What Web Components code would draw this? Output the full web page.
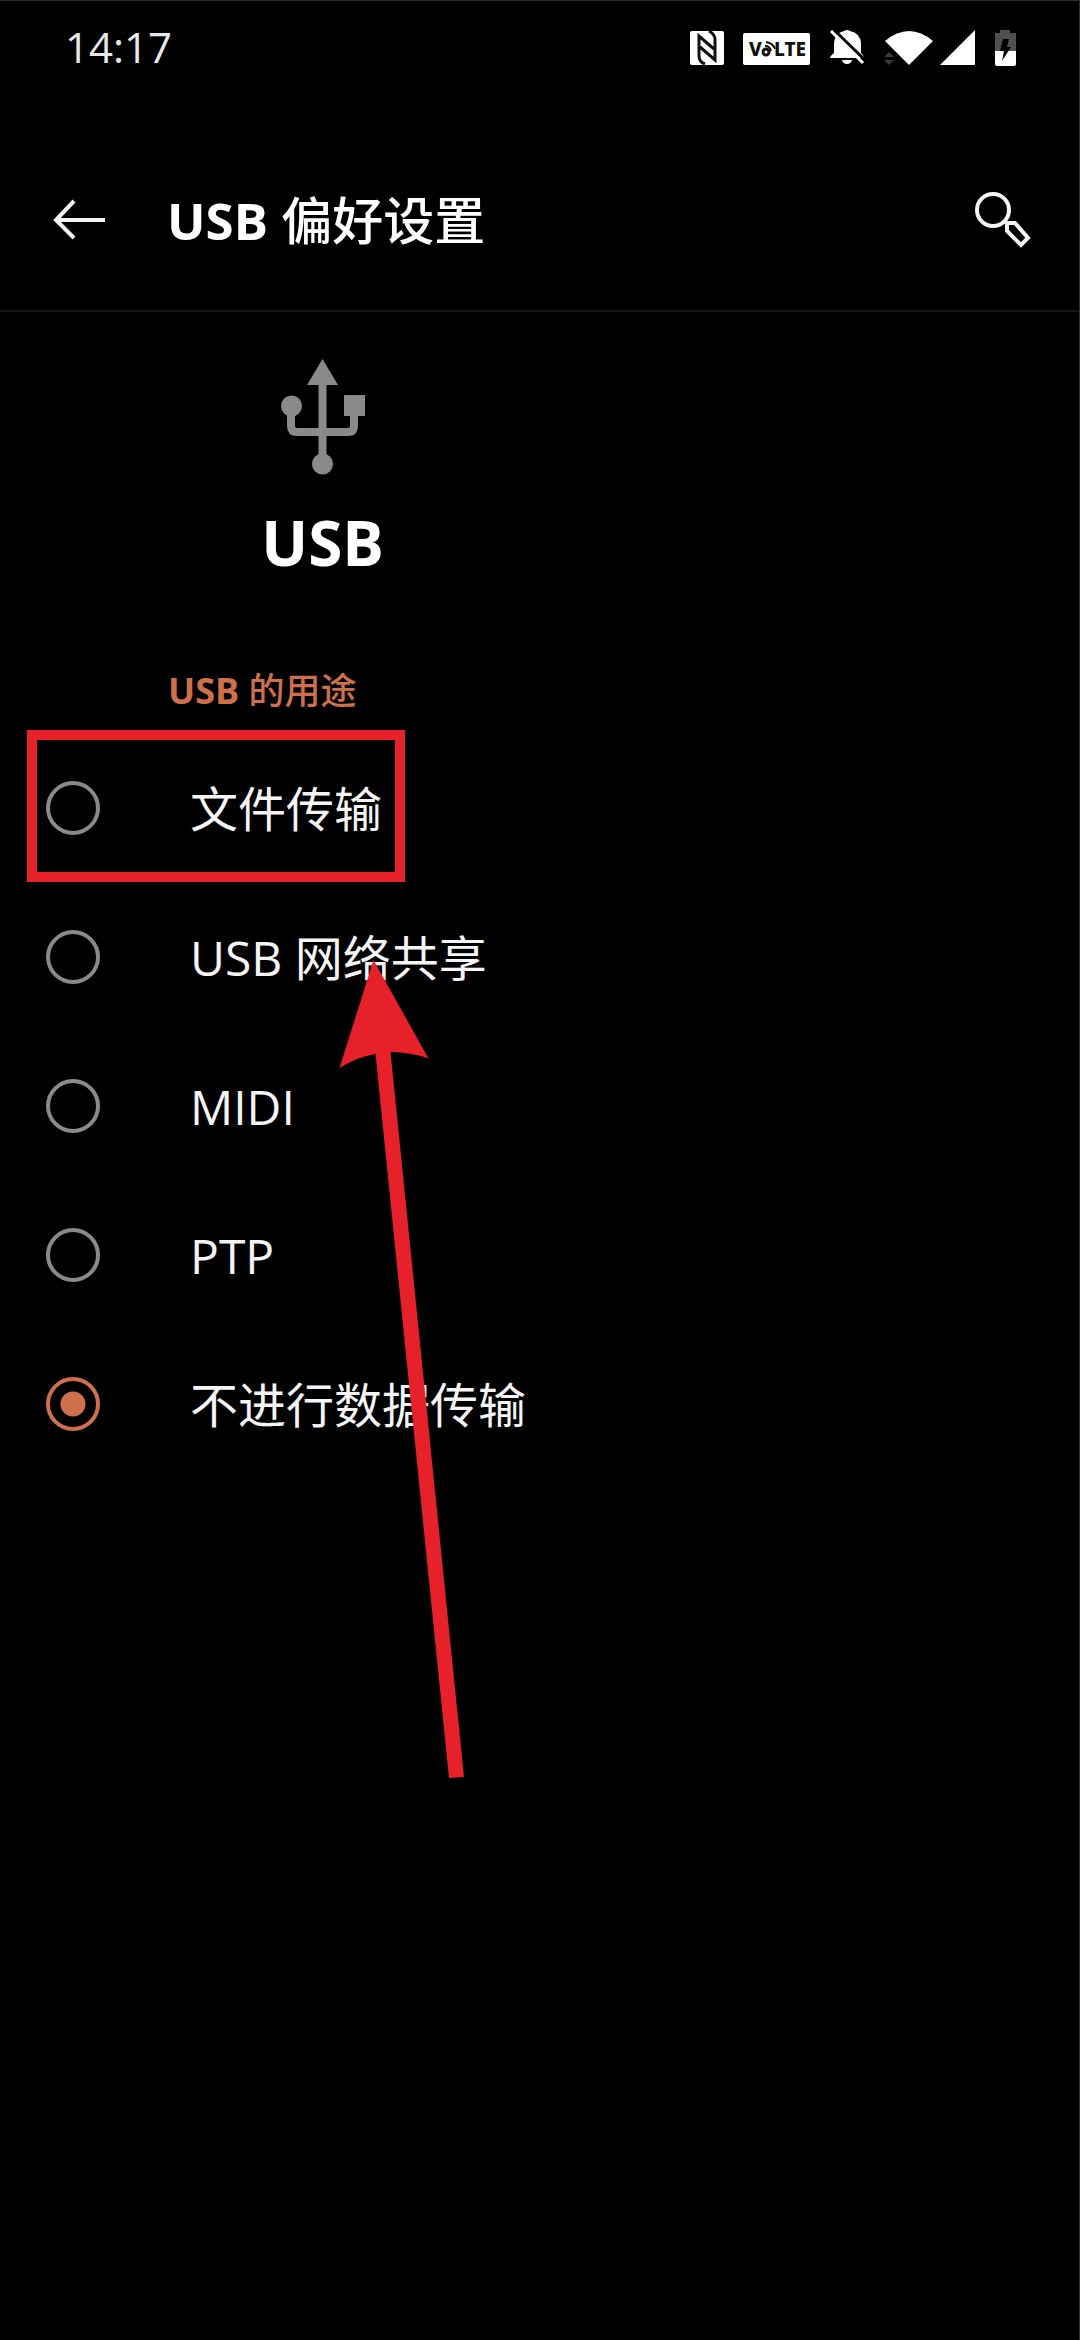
<!DOCTYPE html>
<html lang="zh-CN">
<head>
<meta charset="utf-8">
<meta name="viewport" content="width=device-width, initial-scale=1">
<title>USB 偏好设置</title>
<style>
  html { background: #000; }
  body {
    margin: 0;
    background: #000;
    color: #fff;
    font-family: "Open Sans", "Noto Sans CJK SC", sans-serif;
    --accent: #cf6f4b;
    --muted: #8a8a8a;
    --mark: #e62129;
  }
</style>
</head>
<body>
<phone-screen>
  <status-bar time="14:17"></status-bar>
  <app-bar><b>USB</b> 偏好设置</app-bar>
  <usb-header>USB</usb-header>
  <usb-options><b>USB</b> 的用途</usb-options>
</phone-screen>

<script>
class BaseElement extends HTMLElement {
  constructor() {
    super();
    this.attachShadow({ mode: "open" }).innerHTML = this.template();
  }
}

customElements.define("phone-screen", class extends BaseElement {
  template() {
    return `
    <style>
      :host {
        display: flex; flex-direction: column; box-sizing: border-box;
        min-height: 100vh; background: #000; overflow: hidden;
        border-top: 1px solid #303030; border-right: 1px solid #303030;
      }
    </style>
    <slot></slot>`;
  }
});

customElements.define("status-bar", class extends BaseElement {
  template() {
    return `
    <style>
      :host {
        display: flex; justify-content: space-between; align-items: center;
        height: 94px; padding: 0 63px 0 65px;
      }
      time { font-size: 42px; line-height: 60px; color: #e8e8e8; padding-bottom: 2px; }
      .icons { display: flex; align-items: center; }
      svg { display: block; height: 36px; fill: #fff; }
      text { font-family: "Noto Sans", sans-serif; font-weight: 800; fill: #111; }
    </style>
    <time>${this.getAttribute("time")}</time>
    <div class="icons">
      <svg width="54" height="36" viewBox="688 30 54 36" role="img" aria-label="NFC">
        <rect x="689" y="31" width="34" height="34" rx="2"/>
        <path d="M704 64Q698 62 698 56V36L713 49M708 31Q714 34 714 40V60L699 47" fill="none" stroke="#111" stroke-width="3"/>
      </svg>
      <svg width="86" height="36" viewBox="742 30 86 36" role="img" aria-label="VoLTE">
        <rect x="742" y="33" width="67" height="32" rx="2"/>
        <text x="748" y="56" font-size="19">V</text>
        <text x="773" y="56" font-size="19">LTE</text>
        <circle cx="765" cy="52" r="3" fill="none" stroke="#111" stroke-width="3"/>
        <path d="M764 46Q769 46 770 51M765 42Q772 43 774 49" fill="none" stroke="#111" stroke-width="2"/>
      </svg>
      <svg width="54" height="36" viewBox="828 30 54 36" role="img" aria-label="静音">
        <path d="M829 58Q829 56 833 53V43Q834 33 843 31Q846 29 849 31Q859 33 860 43V53Q863 55 863 58ZM841 60H851Q850 64 846 64Q842 64 841 60Z"/>
        <path d="M832 29L865 61" fill="none" stroke="#000" stroke-width="3"/>
        <path d="M830 31L862 63" fill="none" stroke="#fff" stroke-width="3"/>
      </svg>
      <svg width="56" height="36" viewBox="882 30 56 36" role="img" aria-label="WLAN">
        <path d="M884 41Q908 21 932 41L908 65Z"/>
        <path d="M883 57L888 52L893 57ZM883 60H893L888 65Z" fill="#3a3a3a"/>
      </svg>
      <svg width="56" height="36" viewBox="938 30 56 36" role="img" aria-label="信号">
        <path d="M974 30V65H939Z"/>
      </svg>
      <svg width="21" height="36" viewBox="995 30 21 36" role="img" aria-label="正在充电">
        <path d="M995 33H1000V30H1010V33H1016V52H995Z" fill="#505050"/>
        <path d="M995 51H1016V64Q1016 66 1014 66H997Q995 66 995 64Z"/>
        <path d="M1003 39H1009L1007 47H1011L1002 61L1004 51H1000Z" fill="#000"/>
      </svg>
    </div>`;
  }
});

customElements.define("app-bar", class extends BaseElement {
  template() {
    return `
    <style>
      :host {
        display: flex; align-items: center; box-sizing: border-box;
        height: 217px; padding: 34px 44px 0 50px; border-bottom: 2px solid #161616;
      }
      button { padding: 0; border: 0; background: none; color: #fff; }
      svg { display: block; fill: none; stroke: #f4f4f4; stroke-width: 4; }
      h1 { flex: 1; margin: 0 0 0 57px; font-size: 51px; line-height: 72px; font-weight: 500; }
      ::slotted(b) { font-weight: 700; }
    </style>
    <button aria-label="返回">
      <svg width="60" height="60" viewBox="50 190 60 60"><path d="M105 220H57M74 201L56 220L74 238"/></svg>
    </button>
    <h1><slot></slot></h1>
    <button aria-label="搜索">
      <svg width="60" height="60" viewBox="974 190 60 60">
        <circle cx="992" cy="210" r="16"/>
        <path d="M1003 221L1006 223H1014L1027 238L1020 245L1006 231V223"/>
      </svg>
    </button>`;
  }
});

customElements.define("usb-header", class extends BaseElement {
  template() {
    return `
    <style>
      :host { display: flex; }
      .entity { display: flex; flex-direction: column; align-items: center; box-sizing: border-box; width: 60%; padding: 47px 2px 80px 0; }
      svg { display: block; fill: #8a8a8a; }
      h2 { margin: 25px 0 0; font-size: 62px; line-height: 84px; font-weight: 700; }
    </style>
    <div class="entity">
      <svg width="84" height="116" viewBox="281 359 84 116" aria-hidden="true">
        <path d="M322.500 359L338 385H307Z"/>
        <path d="M322.500 382V464M291 405V426Q291 432 297 432H348Q354 432 354 426V410" fill="none" stroke="#8a8a8a" stroke-width="8"/>
        <circle cx="291.500" cy="406" r="10.500"/>
        <rect x="344" y="395" width="21" height="21"/>
        <circle cx="322.500" cy="464" r="10.500"/>
      </svg>
      <h2><slot></slot></h2>
    </div>`;
  }
});

customElements.define("usb-options", class extends BaseElement {
  template() {
    const modes = ["文件传输", "USB 网络共享", "MIDI", "PTP", "不进行数据传输"];
    const rows = modes.map((name, i) => `
      <label>
        <input type="radio" name="usb-mode" ${i === 4 ? "checked" : ""}>
        <span>${name}</span>
        ${i === 0 ? `<i class="mark"></i>` : ""}
      </label>`).join("");
    return `
    <style>
      :host { display: block; position: relative; }
      fieldset { margin: 0; padding: 0; border: 0; min-width: 0; }
      legend { padding: 0 0 0 168px; font-size: 36px; line-height: 54px; font-weight: 500; color: var(--accent); }
      ::slotted(b) { font-weight: 700; }
      .rows { display: flex; flex-direction: column; padding-top: 15px; }
      label { position: relative; display: flex; align-items: center; height: 149px; padding-left: 46px; }
      input {
        appearance: none; box-sizing: border-box; flex: none; margin: 0;
        width: 54px; height: 54px; border: 4px solid var(--muted); border-radius: 50%;
      }
      input:checked {
        border-color: var(--accent);
        background: radial-gradient(circle, var(--accent) 12px, transparent 13px);
      }
      span { margin-left: 90px; padding-top: 3px; font-size: 48px; line-height: 70px; color: #f4f4f4; }
      .mark {
        position: absolute; left: 27px; top: -3px; box-sizing: border-box;
        width: 378px; height: 152px; border: 10px solid var(--mark);
      }
      .arrow { position: absolute; left: 339px; top: 296px; fill: var(--mark); pointer-events: none; }
    </style>
    <fieldset>
      <legend><slot></slot></legend>
      <div class="rows">${rows}</div>
    </fieldset>
    <svg class="arrow" width="126" height="818" viewBox="339 960 126 818" aria-hidden="true">
      <path d="M373.500 960L428.500 1058.500Q411 1052 390.500 1052L464 1777L449 1778L375.500 1054Q357 1057 339.500 1068Z"/>
    </svg>`;
  }
});
</script>
</body>
</html>
